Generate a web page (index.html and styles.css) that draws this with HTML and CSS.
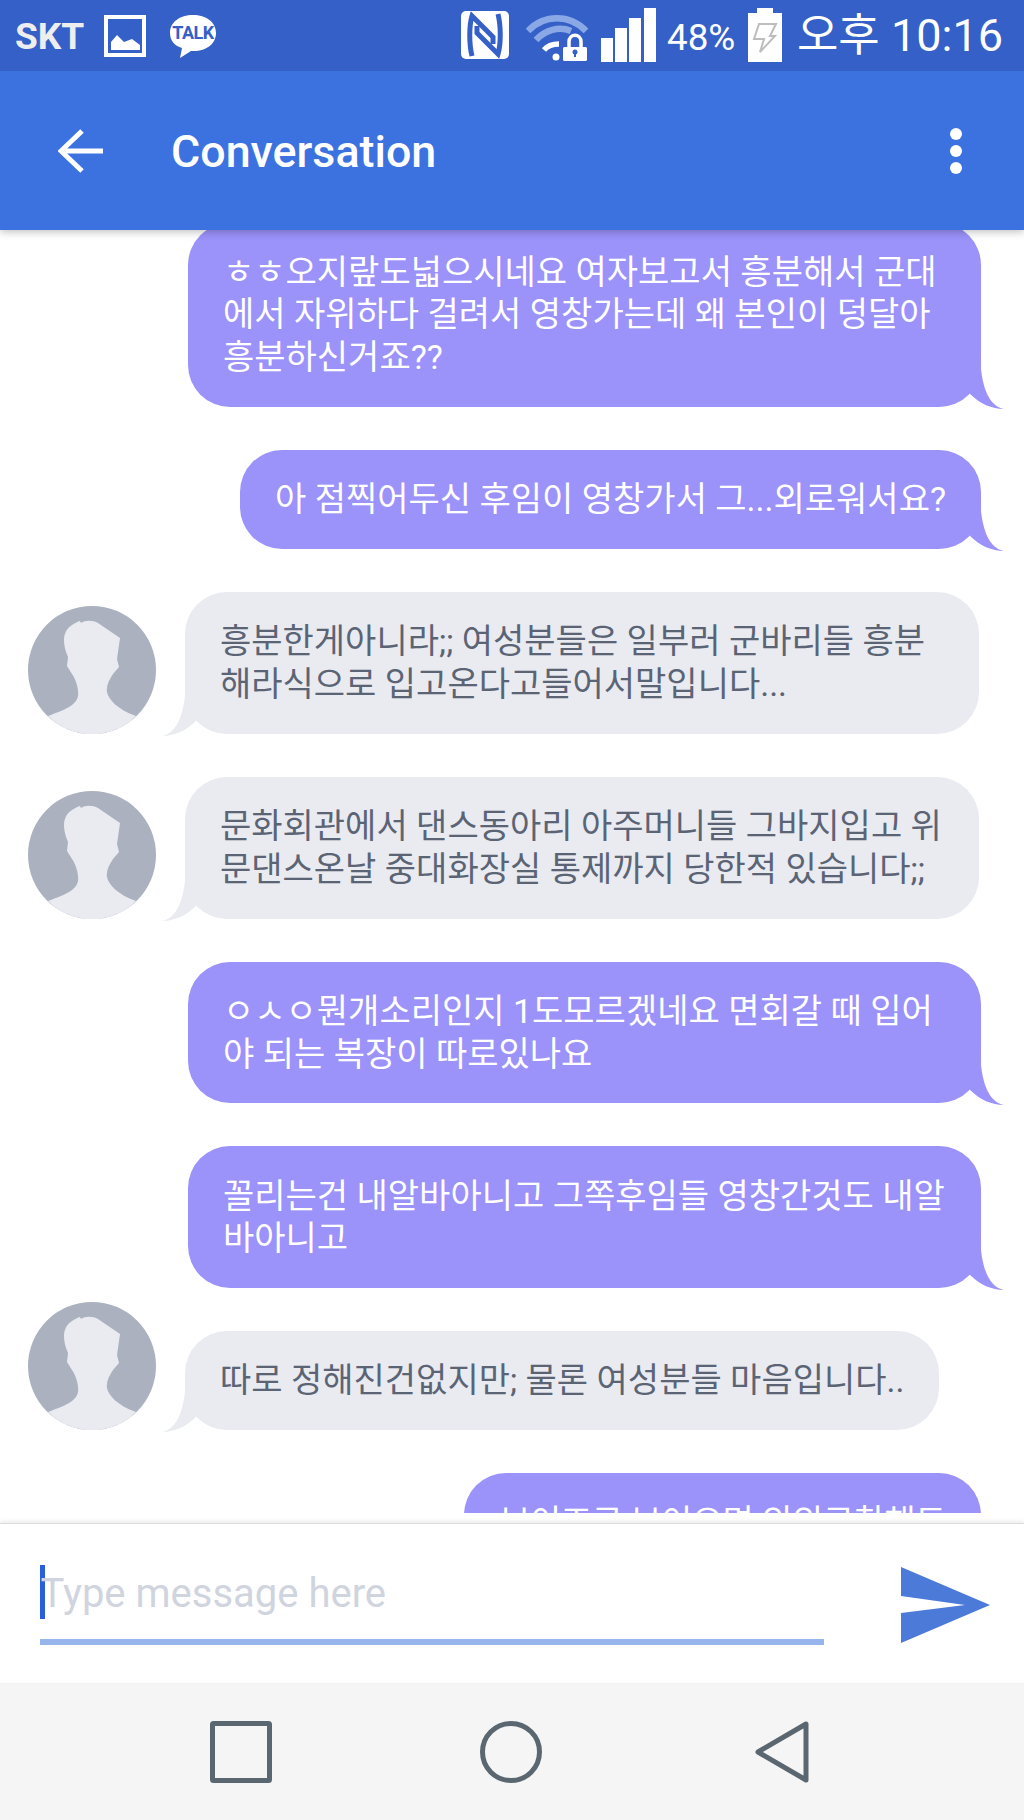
FILE: index.html
```html
<!DOCTYPE html>
<html lang="ko">
<head>
<meta charset="utf-8">
<title>Conversation</title>
<link rel="stylesheet" href="styles.css">
</head>
<body>
<div class="app">
  <div class="status">
    <span class="carrier">SKT</span>
    <svg class="ico-image" width="42" height="42" viewBox="0 0 42 42"><rect x="2" y="2" width="38" height="38" fill="none" stroke="#fff" stroke-width="4"/><path d="M7 35V27L13 20L20 27L28 24L36 30V35Z" fill="#fff"/></svg>
    <svg class="ico-talk" width="48" height="46" viewBox="0 0 48 46"><path d="M23 1C10 1 0 8 0 19C0 27 5 32 12 34L10 44L21 37C36 38 46 30 46 19C46 8 36 1 23 1Z" fill="#fff"/><text x="23" y="25" text-anchor="middle" class="talk-text">TALK</text></svg>
    <span class="status-spacer"></span>
    <svg class="ico-nfc" width="48" height="48" viewBox="0 0 48 48"><rect width="48" height="48" rx="5" fill="#fff"/><path d="M11 45C8 33 8 15 11 5L32 26V33" fill="none" stroke="#3460c8" stroke-width="5"/><path d="M37 3C40 15 40 33 37 43L16 22V15" fill="none" stroke="#3460c8" stroke-width="5"/></svg>
    <svg class="ico-wifi" width="63" height="47" viewBox="0 0 63 47"><path d="M2 16C18 -1 44 -1 60 16" fill="none" stroke="#8ba8e6" stroke-width="6.500"/><path d="M10 25C19 15 33 11 45 16" fill="none" stroke="#8ba8e6" stroke-width="6.500"/><path d="M18 35C22 30 28 29 33 29" fill="none" stroke="#fff" stroke-width="5.500"/><circle cx="30" cy="42" r="3.500" fill="#fff"/><rect x="37" y="32" width="24" height="14" rx="1.500" fill="#fff"/><path d="M43 32V27C43 18 55 18 55 27V32" fill="none" stroke="#fff" stroke-width="3.500"/><circle cx="49" cy="37" r="2.500" fill="#3460c8"/><rect x="48" y="37" width="2" height="5" fill="#3460c8"/></svg>
    <svg class="ico-signal" width="55" height="54" viewBox="0 0 55 54"><path d="M0 30H12V54H0ZM14 20H26V54H14ZM28 10H40V54H28ZM43 0H55V54H43Z" fill="#fff"/></svg>
    <span class="percent">48%</span>
    <svg class="ico-battery" width="34" height="54" viewBox="0 0 34 54"><path d="M9 0H25V5H34V54H0V5H9Z" fill="#fff"/><path d="M11 16H28L22 28H27L12 44L16 31H6Z" fill="none" stroke="#bdbdbd" stroke-width="2"/></svg>
    <span class="clock">오후 10:16</span>
  </div>

  <header class="appbar">
    <svg class="back" width="46" height="46" viewBox="0 0 46 46"><path d="M3 23H45M24 3L3 23L24 43" fill="none" stroke="#fff" stroke-width="5"/></svg>
    <h1 class="title">Conversation</h1>
    <div class="more"><i></i><i></i><i></i></div>
  </header>

  <main class="list">
    <div class="row me"><div class="bubble wide">ㅎㅎ오지랖도넓으시네요 여자보고서 흥분해서 군대에서 자위하다 걸려서 영창가는데 왜 본인이 덩달아 흥분하신거죠??<svg class="tail" width="24" height="54" viewBox="0 0 24 54"><path d="M0 0C1 30 8 51 24 54C12 54 0 49 -11 38L-11 0Z" fill="#9b92fa"/></svg></div></div>
    <div class="row me"><div class="bubble">아 점찍어두신 후임이 영창가서 그...외로워서요?<svg class="tail" width="24" height="54" viewBox="0 0 24 54"><path d="M0 0C1 30 8 51 24 54C12 54 0 49 -11 38L-11 0Z" fill="#9b92fa"/></svg></div></div>
    <div class="row them">
      <svg class="avatar" width="128" height="128" viewBox="0 0 128 128"><circle cx="64" cy="64" r="64" fill="#abb1be"/><path d="M52 15L53 17C57 14 65 14 70 17L92 32L89 53L91 61L85 68C81 74 78 80 79 86C80 93 90 104 108 110A62 62 0 0 1 20 110C36 104 48 100 50 90C51 82 47 72 44 68L39 60L40 51C36 42 35 33 37 28C39 21 46 17 52 15Z" fill="#e9ebf1"/></svg>
      <div class="bubble wide">흥분한게아니라;; 여성분들은 일부러 군바리들 흥분해라식으로 입고온다고들어서말입니다...<svg class="tail" width="24" height="54" viewBox="0 0 24 54"><path d="M24 0C23 30 16 51 0 54C12 54 24 49 35 38L35 0Z" fill="#e9ebf1"/></svg></div>
    </div>
    <div class="row them">
      <svg class="avatar" width="128" height="128" viewBox="0 0 128 128"><circle cx="64" cy="64" r="64" fill="#abb1be"/><path d="M52 15L53 17C57 14 65 14 70 17L92 32L89 53L91 61L85 68C81 74 78 80 79 86C80 93 90 104 108 110A62 62 0 0 1 20 110C36 104 48 100 50 90C51 82 47 72 44 68L39 60L40 51C36 42 35 33 37 28C39 21 46 17 52 15Z" fill="#e9ebf1"/></svg>
      <div class="bubble wide">문화회관에서 댄스동아리 아주머니들 그바지입고 위문댄스온날 중대화장실 통제까지 당한적 있습니다;;<svg class="tail" width="24" height="54" viewBox="0 0 24 54"><path d="M24 0C23 30 16 51 0 54C12 54 24 49 35 38L35 0Z" fill="#e9ebf1"/></svg></div>
    </div>
    <div class="row me"><div class="bubble wide">ㅇㅅㅇ뭔개소리인지 1도모르겠네요 면회갈 때 입어야 되는 복장이 따로있나요<svg class="tail" width="24" height="54" viewBox="0 0 24 54"><path d="M0 0C1 30 8 51 24 54C12 54 0 49 -11 38L-11 0Z" fill="#9b92fa"/></svg></div></div>
    <div class="row me"><div class="bubble wide">꼴리는건 내알바아니고 그쪽후임들 영창간것도 내알바아니고<svg class="tail" width="24" height="54" viewBox="0 0 24 54"><path d="M0 0C1 30 8 51 24 54C12 54 0 49 -11 38L-11 0Z" fill="#9b92fa"/></svg></div></div>
    <div class="row them">
      <svg class="avatar" width="128" height="128" viewBox="0 0 128 128"><circle cx="64" cy="64" r="64" fill="#abb1be"/><path d="M52 15L53 17C57 14 65 14 70 17L92 32L89 53L91 61L85 68C81 74 78 80 79 86C80 93 90 104 108 110A62 62 0 0 1 20 110C36 104 48 100 50 90C51 82 47 72 44 68L39 60L40 51C36 42 35 33 37 28C39 21 46 17 52 15Z" fill="#e9ebf1"/></svg>
      <div class="bubble">따로 정해진건없지만; 물론 여성분들 마음입니다..<svg class="tail" width="24" height="54" viewBox="0 0 24 54"><path d="M24 0C23 30 16 51 0 54C12 54 24 49 35 38L35 0Z" fill="#e9ebf1"/></svg></div>
    </div>
    <div class="row me"><div class="bubble tight">보이즈로 보이으면 의외로착해도<svg class="tail" width="24" height="54" viewBox="0 0 24 54"><path d="M0 0C1 30 8 51 24 54C12 54 0 49 -11 38L-11 0Z" fill="#9b92fa"/></svg></div></div>
  </main>

  <footer class="composer">
    <div class="field">
      <span class="caret"></span>
      <span class="placeholder">Type message here</span>
    </div>
    <svg class="send" width="89" height="76" viewBox="0 0 89 76"><path d="M0 0L89 38L0 76V46L64 38L0 29Z" fill="#4c7ad9"/></svg>
  </footer>

  <nav class="navbar">
    <svg width="62" height="62" viewBox="0 0 62 62"><rect x="2.500" y="2.500" width="57" height="57" rx="1" fill="none" stroke="#5a6770" stroke-width="5"/></svg>
    <svg width="62" height="62" viewBox="0 0 62 62"><circle cx="31" cy="31" r="28.500" fill="none" stroke="#5a6770" stroke-width="5"/></svg>
    <svg class="nav-back" width="54" height="62" viewBox="0 0 54 62"><path d="M51 3V59L3 31Z" fill="none" stroke="#5a6770" stroke-width="5" stroke-linejoin="round"/></svg>
  </nav>
</div>
</body>
</html>
```
FILE: styles.css
```css
* { box-sizing: border-box; }
html, body { margin: 0; padding: 0; background: #fff; }
body { font-family: Roboto, "Noto Sans CJK KR", sans-serif; }

.app {
  width: 1024px;
  height: 1820px;
  display: flex;
  flex-direction: column;
  overflow: hidden;
  background: #fff;
}

/* status bar */
.status {
  flex: 0 0 71px;
  height: 71px;
  background: #3460c8;
  display: flex;
  align-items: flex-start;
  padding-left: 15px;
  color: #fff;
  position: relative;
  z-index: 3;
}
.carrier { font-weight: 700; font-size: 37px; line-height: 42px; margin-top: 16px; color: #eee; width: 89px; }
.ico-image { margin-top: 15px; }
.ico-talk { margin-top: 14px; margin-left: 24px; }
.talk-text { font-family: Roboto, sans-serif; font-weight: 700; font-size: 18px; letter-spacing: -.5px; fill: #3460c8; }
.status-spacer { flex: 1; }
.ico-nfc { margin-top: 11px; }
.ico-wifi { margin-top: 15px; margin-left: 17px; }
.ico-signal { margin-top: 8px; margin-left: 12px; }
.percent { font-size: 36.800px; line-height: 42px; margin-top: 17px; margin-left: 11px; width: 81px; }
.ico-battery { margin-top: 8px; }
.clock { font-size: 45px; line-height: 52px; margin-top: 10px; margin-left: 15px; margin-right: 21px; white-space: nowrap; }

/* app bar */
.appbar {
  flex: 0 0 159px;
  height: 159px;
  background: #3c72e0;
  display: flex;
  align-items: center;
  padding: 0 62px 0 58px;
  box-shadow: 0 2px 8px rgba(0, 0, 0, .25);
  position: relative;
  z-index: 2;
  color: #fff;
}
.title { margin: 2px 0 0 67px; font-size: 44.800px; font-weight: 500; line-height: 50px; flex: 1; }
.more { display: flex; flex-direction: column; gap: 5px; }
.more i { display: block; width: 12px; height: 12px; border-radius: 50%; background: #fff; }

/* messages */
.list {
  flex: 0 0 1283px;
  height: 1283px;
  overflow: hidden;
  display: flex;
  flex-direction: column;
  gap: 43px;
}
.list > :first-child { margin-top: -7.500px; }
.row { display: flex; flex: none; }
.row.me { justify-content: flex-end; padding-right: 43px; }
.row.them { align-items: flex-end; padding-left: 28px; gap: 29px; }
.avatar { flex: none; margin-top: -29px; }
.bubble {
  position: relative;
  max-width: 794px;
  padding: 28.200px 35px;
  border-radius: 42px;
  font-size: 34px;
  line-height: 42.700px;
  word-break: break-all;
}
.bubble.wide { padding-right: 27px; }
.bubble.tight { letter-spacing: -.5px; }
.me .bubble { background: #9b92fa; color: #fff; max-width: 793px; }
.them .bubble { background: #e9ebf1; color: #5b6475; }
.tail { position: absolute; bottom: -2px; overflow: visible; }
.me .tail { right: -23px; }
.them .tail { left: -23px; }

/* composer */
.composer {
  flex: 0 0 160px;
  height: 160px;
  margin-top: 10px;
  border-top: 1px solid #dcdcdc;
  box-shadow: 0 -2px 4px rgba(0, 0, 0, .08);
  background: #fff;
  display: flex;
  align-items: flex-start;
  padding: 41px 0 0 40px;
  position: relative;
  z-index: 2;
}
.field {
  width: 784px;
  height: 80px;
  border-bottom: 6px solid #97b4ec;
  display: flex;
  align-items: flex-start;
}
.caret { flex: none; width: 4.500px; height: 54px; background: #2a5fdc; }
.placeholder { font-size: 40px; line-height: 54px; color: #d0d4de; margin: 2px 0 0 -4px; }
.send { margin-left: 77px; margin-top: 2px; }

/* navigation */
.navbar {
  flex: 1;
  background: #f5f5f5;
  display: flex;
  align-items: flex-start;
  gap: 208px;
  padding: 38px 0 0 210px;
}
.nav-back { margin-left: 5px; }
```
